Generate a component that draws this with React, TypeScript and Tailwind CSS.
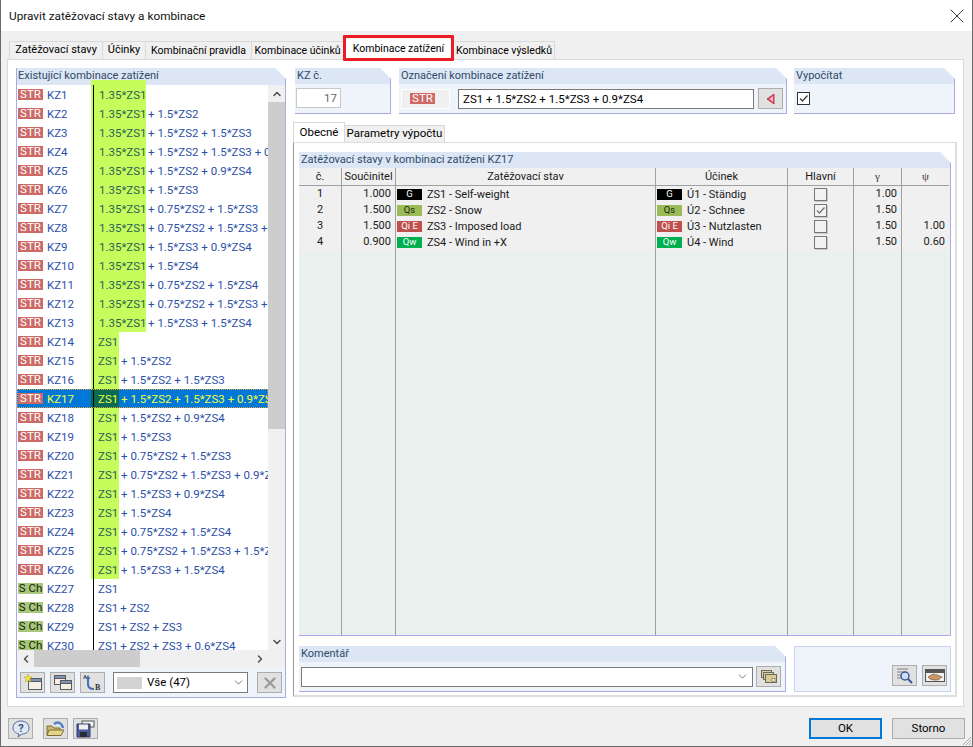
import type { ReactNode } from "react"
import { ChevronDown, ChevronLeft, ChevronRight, ChevronUp, X } from "lucide-react"

const TABS = [
  { label: "Zatěžovací stavy", w: "w-[93px] text-[11px]" },
  { label: "Účinky", w: "w-[43px] text-[11px]" },
  { label: "Kombinační pravidla", w: "w-[106px] text-[10.5px]" },
  { label: "Kombinace účinků", w: "w-[92px] text-[10.5px]" },
]

const STR_TERMS = [
  "",
  "+ 1.5*ZS2",
  "+ 1.5*ZS2 + 1.5*ZS3",
  "+ 1.5*ZS2 + 1.5*ZS3 + 0.9*ZS4",
  "+ 1.5*ZS2 + 0.9*ZS4",
  "+ 1.5*ZS3",
  "+ 0.75*ZS2 + 1.5*ZS3",
  "+ 0.75*ZS2 + 1.5*ZS3 + 0.9*ZS4",
  "+ 1.5*ZS3 + 0.9*ZS4",
  "+ 1.5*ZS4",
  "+ 0.75*ZS2 + 1.5*ZS4",
  "+ 0.75*ZS2 + 1.5*ZS3 + 1.5*ZS4",
  "+ 1.5*ZS3 + 1.5*ZS4",
]

const TABLE_ROWS = [
  { no: 1, factor: "1.000", tag: "G", tagClass: "bg-black text-white", loadCase: "ZS1 - Self-weight", action: "Ú1 - Ständig", main: false, gamma: "1.00", psi: "" },
  { no: 2, factor: "1.500", tag: "Qs", tagClass: "bg-[#9bbb59] text-[#1c2a08]", loadCase: "ZS2 - Snow", action: "Ú2 - Schnee", main: true, gamma: "1.50", psi: "" },
  { no: 3, factor: "1.500", tag: "Qi E", tagClass: "bg-[#c0504d] text-white", loadCase: "ZS3 - Imposed load", action: "Ú3 - Nutzlasten", main: false, gamma: "1.50", psi: "1.00" },
  { no: 4, factor: "0.900", tag: "Qw", tagClass: "bg-[#00b050] text-white", loadCase: "ZS4 - Wind in +X", action: "Ú4 - Wind", main: false, gamma: "1.50", psi: "0.60" },
]

function GroupBox({ title, className, children }: { title: string; className: string; children: ReactNode }) {
  return (
    <div className={`flex flex-col bg-[#eff3fa] border-r border-b border-[#aaaae6] [clip-path:polygon(0_0,calc(100%-11px)_0,100%_11px,100%_100%,0_100%)] ${className}`}>
      <div className="h-[16px] shrink-0 bg-[#dce6f4] pl-[2px] text-[11px] leading-[16px] text-[#2f4a68]">{title}</div>
      {children}
    </div>
  )
}

function IconButton({ children, className = "" }: { children: ReactNode; className?: string }) {
  return (
    <button className={`flex h-[21px] w-[25px] shrink-0 items-center justify-center border border-[#adadad] bg-[#e1e1e1] ${className}`}>
      {children}
    </button>
  )
}

function CaseBadge({ kind }: { kind: "STR" | "S Ch" }) {
  return (
    <span className={`flex h-[11px] w-[25px] shrink-0 items-center justify-center text-[11.5px] ${kind === "STR" ? "bg-[#cd6a66] text-white" : "bg-[#a9c77c] text-[#14240a]"}`}>
      {kind}
    </span>
  )
}

function ComboRow({ id, kind, head, tail, green }: { id: number; kind: "STR" | "S Ch"; head: string; tail: string; green: "wide" | "narrow" | "none" }) {
  const selected = id === 17
  const cellBg = selected ? "bg-[#0a6b52]" : green === "none" ? "" : "bg-[#c6fd5c]"
  const width = green === "wide" ? "w-[55px]" : "w-[28px]"
  const textColor = selected ? "text-[#f2ff3c]" : "text-[#2c4fa8]"
  return (
    <div className={`relative flex h-[19px] shrink-0 items-center whitespace-nowrap ${textColor} ${selected ? "bg-[#0078d7] outline-1 -outline-offset-1 outline-dotted outline-[#e0a040]" : ""}`}>
      <div className="ml-[1px] flex w-[73px] shrink-0 items-center">
        <CaseBadge kind={kind} />
        <span className="ml-[4px] pt-[2px]">KZ{id}</span>
      </div>
      <div className={`flex h-full shrink-0 items-center ${green === "none" ? "" : width} ${cellBg}`}>
        <span className="ml-[2px] h-full w-[1px] shrink-0 bg-black" />
        <span className={`pt-[2px] ${green === "wide" ? "ml-[5px]" : "ml-[4px]"} ${selected ? "" : green === "none" ? "" : "text-[#2c5f58]"}`}>{head}</span>
      </div>
      {tail && <span className="ml-[2px] pt-[2px]">{tail}</span>}
    </div>
  )
}

function WindowGlyph({ x, y, size = 12 }: { x: number; y: number; size?: number }) {
  return (
    <g>
      <rect x={x} y={y} width={size} height={size - 2} fill="#f4f1e4" stroke="#5a5a5a" />
      <rect x={x} y={y} width={size} height={3} fill="#7d93b8" stroke="#5a5a5a" />
    </g>
  )
}

function Checkbox({ checked, dark }: { checked: boolean; dark?: boolean }) {
  return (
    <span className={`flex h-[13px] w-[13px] items-center justify-center border bg-[#f2f2f2] ${dark ? "border-[#333333] bg-white" : "border-[#777777] shadow-[1px_1px_0_#c8c8c8]"}`}>
      {checked && (
        <svg width="11" height="11" viewBox="0 0 11 11">
          <path d="M2 5.5 L4.5 8 L9.5 2.5" fill="none" stroke={dark ? "#444444" : "#777777"} strokeWidth="1.4" />
        </svg>
      )}
    </span>
  )
}

function CombinationList() {
  const rows = [
    ...STR_TERMS.map((tail, i) => <ComboRow key={i + 1} id={i + 1} kind="STR" head="1.35*ZS1" tail={tail} green="wide" />),
    ...STR_TERMS.map((tail, i) => <ComboRow key={i + 14} id={i + 14} kind="STR" head="ZS1" tail={tail} green="narrow" />),
    <ComboRow key={27} id={27} kind="S Ch" head="ZS1" tail="" green="none" />,
    <ComboRow key={28} id={28} kind="S Ch" head="ZS1" tail="+ ZS2" green="none" />,
    <ComboRow key={29} id={29} kind="S Ch" head="ZS1" tail="+ ZS2 + ZS3" green="none" />,
    <ComboRow key={30} id={30} kind="S Ch" head="ZS1" tail="+ ZS2 + ZS3 + 0.6*ZS4" green="none" />,
  ]
  return (
    <div className="flex h-[630px] w-[270px] shrink-0 flex-col border-l border-r border-b border-[#aaaae6] bg-[#eff3fa] [clip-path:polygon(0_0,calc(100%-11px)_0,100%_11px,100%_100%,0_100%)]">
      <div className="relative h-[17px] shrink-0 bg-[#dce6f4] pl-[1px] text-[11px] leading-[16px] text-[#2f4a68]">
        <span className="absolute left-[74px] top-[12px] h-[5px] w-[55px] bg-[#c6fd5c]" />
        <span className="relative">Existující kombinace zatížení</span>
      </div>
      <div className="flex h-[565px] shrink-0">
        <div className="flex w-[251px] shrink-0 flex-col overflow-hidden bg-white">{rows}</div>
        <div className="flex w-[17px] shrink-0 flex-col items-center bg-[#f0f0f0]">
          <div className="flex h-[17px] w-full shrink-0 items-center justify-center">
            <ChevronUp size={12} strokeWidth={3} className="text-[#505050]" />
          </div>
          <div className="h-[327px] w-full shrink-0 bg-[#cdcdcd]" />
          <div className="flex-1" />
          <div className="flex h-[17px] w-full shrink-0 items-center justify-center">
            <ChevronDown size={12} strokeWidth={3} className="text-[#505050]" />
          </div>
        </div>
      </div>
      <div className="flex h-[17px] shrink-0 items-center bg-[#f0f0f0]">
        <div className="flex h-full w-[17px] shrink-0 items-center justify-center">
          <ChevronLeft size={12} strokeWidth={3} className="text-[#505050]" />
        </div>
        <div className="h-full w-[106px] shrink-0 bg-[#cdcdcd]" />
        <div className="flex-1" />
        <div className="mr-[17px] flex h-full w-[17px] shrink-0 items-center justify-center">
          <ChevronRight size={12} strokeWidth={3} className="text-[#505050]" />
        </div>
      </div>
      <div className="flex flex-1 items-center pl-[3px] pt-[1px]">
        <IconButton>
          <svg width="20" height="17" viewBox="0 0 20 17">
            <WindowGlyph x={5.5} y={4.5} size={13} />
            <path d="M5 0 L6 3 L9 3 L6.8 5 L7.6 8 L5 6.2 L2.4 8 L3.2 5 L1 3 L4 3 Z" fill="#f5e63c" stroke="#b8a020" strokeWidth="0.5" />
          </svg>
        </IconButton>
        <IconButton className="ml-[5px]">
          <svg width="20" height="17" viewBox="0 0 20 17">
            <WindowGlyph x={1.5} y={1.5} size={11} />
            <WindowGlyph x={7.5} y={6.5} size={11} />
          </svg>
        </IconButton>
        <IconButton className="ml-[5px]">
          <svg width="21" height="18" viewBox="0 0 21 18">
            <path d="M6 3 L6 10 Q6 15 12 15" fill="none" stroke="#3f6fb4" strokeWidth="2" />
            <path d="M3.5 5 L6 1 L8.5 5 Z" fill="#3f6fb4" />
            <text x="1" y="5" fontSize="6" fontWeight="700" fill="#555555">A</text>
            <text x="13" y="16" fontSize="8" fontWeight="700" fill="#333333" fontFamily="'Liberation Serif',serif">B</text>
          </svg>
        </IconButton>
        <div className="ml-[8px] flex h-[21px] w-[135px] shrink-0 items-center border border-[#7a7a7a] bg-white pl-[3px]">
          <span className="h-[12px] w-[25px] shrink-0 bg-[#d3d3d3]" />
          <span className="ml-[5px]">Vše (47)</span>
          <ChevronDown size={13} strokeWidth={1.3} className="ml-auto mr-[2px] text-[#444444]" />
        </div>
        <IconButton className="ml-[9px] bg-[#cfcfcf]">
          <X size={18} strokeWidth={3} className="text-[#9a9a9a]" />
        </IconButton>
      </div>
    </div>
  )
}

function LoadTable() {
  const cell = "border-r border-[#a0a0a0] h-full"
  return (
    <div className="grid h-[467px] grid-cols-[43px_54px_260px_132px_66px_48px_47px] grid-rows-[18px_16px_16px_16px_16px_1fr] bg-[#f0f0f0] text-[11px] text-[#1a1a1a]">
      {["č.", "Součinitel", "Zatěžovací stav", "Účinek", "Hlavní"].map((h) => (
        <div key={h} className={`${cell} border-b text-center leading-[17px]`}>{h}</div>
      ))}
      <div className={`${cell} border-b text-center font-['Liberation_Serif',serif] leading-[17px] text-[#333333]`}>γ</div>
      <div className={`h-full border-b border-[#a0a0a0] text-center font-['Liberation_Serif',serif] leading-[17px] text-[#333333]`}>ψ</div>
      {TABLE_ROWS.map((r) => (
        <div key={r.no} className="contents">
          <div className={`${cell} text-center leading-[16px]`}>{r.no}</div>
          <div className={`${cell} pr-[4px] text-right leading-[16px]`}>{r.factor}</div>
          <div className={`${cell} flex items-center whitespace-nowrap pl-[1px]`}>
            <span className={`flex h-[11px] w-[25px] shrink-0 items-center justify-center text-[9.5px] ${r.tagClass}`}>{r.tag}</span>
            <span className="ml-[5px] pt-[2px]">{r.loadCase}</span>
          </div>
          <div className={`${cell} flex items-center whitespace-nowrap pl-[1px]`}>
            <span className={`flex h-[11px] w-[25px] shrink-0 items-center justify-center text-[9.5px] ${r.tagClass}`}>{r.tag}</span>
            <span className="ml-[5px] pt-[2px]">{r.action}</span>
          </div>
          <div className={`${cell} flex items-center justify-center`}>
            <Checkbox checked={r.main} />
          </div>
          <div className={`${cell} pr-[4px] text-right leading-[16px]`}>{r.gamma}</div>
          <div className="pr-[4px] text-right leading-[16px]">{r.psi}</div>
        </div>
      ))}
      {[0, 1, 2, 3, 4, 5].map((i) => (
        <div key={i} className={`${cell} bg-[#e9f0ee]`} />
      ))}
      <div className="bg-[#e9f0ee]" />
    </div>
  )
}

function RightColumn() {
  return (
    <div className="flex w-[664px] shrink-0 flex-col">
      <div className="flex">
        <GroupBox title="KZ č." className="ml-[2px] h-[46px] w-[96px] shrink-0">
          <div className="ml-[1px] mt-[4px] h-[20px] w-[45px] border border-[#c8c8c8] bg-white pr-[3px] text-right leading-[18px] text-[#666666]">17</div>
        </GroupBox>
        <GroupBox title="Označení kombinace zatížení" className="ml-[8px] h-[46px] w-[388px] shrink-0">
          <div className="mt-[4px] flex items-center">
            <div className="ml-[2px] flex h-[20px] w-[49px] shrink-0 items-center border border-white bg-[#f0f0f0] pl-[8px]">
              <CaseBadge kind="STR" />
            </div>
            <div className="ml-[8px] h-[20px] w-[296px] shrink-0 border border-[#7a7a7a] bg-white pl-[4px] leading-[18px]">ZS1 + 1.5*ZS2 + 1.5*ZS3 + 0.9*ZS4</div>
            <IconButton className="ml-[4px] h-[20px]">
              <svg width="12" height="12" viewBox="0 0 12 12">
                <path d="M9 1 L9 11 L2 6 Z" fill="#f04860" stroke="#a82838" strokeWidth="0.8" />
                <path d="M8 3 L8 9 L4.5 6 Z" fill="#ffc0c8" />
              </svg>
            </IconButton>
          </div>
        </GroupBox>
        <GroupBox title="Vypočítat" className="ml-[7px] h-[46px] w-[161px] shrink-0">
          <div className="ml-[3px] mt-[8px]">
            <Checkbox checked dark />
          </div>
        </GroupBox>
      </div>
      <div className="mt-[8px] flex h-[20px] items-end whitespace-nowrap">
        <div className="flex h-[20px] w-[52px] items-center justify-center border-l border-t border-r border-[#d9d9d9] bg-white">Obecné</div>
        <div className="flex h-[17px] w-[100px] items-center justify-center border-t border-r border-[#d9d9d9] bg-[#f0f0f0]">Parametry výpočtu</div>
      </div>
      <div className="flex h-[555px] w-[664px] flex-col border-l border-t border-r-2 border-b-2 border-[#dedede] border-l-[#9a9a9a] bg-white px-[5px] pt-[9px]">
        <div className="h-[484px] w-[652px] shrink-0 border-r border-b border-[#aaaae6] [clip-path:polygon(0_0,calc(100%-11px)_0,100%_11px,100%_100%,0_100%)]">
          <div className="h-[16px] bg-[#dce6f4] pl-[2px] text-[11px] leading-[16px] text-[#2f4a68]">Zatěžovací stavy v kombinaci zatížení KZ17</div>
          <LoadTable />
        </div>
        <div className="mt-[10px] flex">
          <GroupBox title="Komentář" className="h-[46px] w-[487px] shrink-0">
            <div className="mt-[4px] flex items-center pl-[2px]">
              <div className="flex h-[20px] w-[452px] shrink-0 items-center justify-end border border-[#7a7a7a] bg-white pr-[3px]">
                <ChevronDown size={13} strokeWidth={1.3} className="text-[#444444]" />
              </div>
              <IconButton className="ml-[3px] h-[20px]">
                <svg width="18" height="15" viewBox="0 0 18 15">
                  <rect x="1.5" y="1.5" width="10" height="7" fill="#d8d0a8" stroke="#6a6a58" />
                  <rect x="3.5" y="3.5" width="10" height="7" fill="#d8d0a8" stroke="#6a6a58" />
                  <rect x="5.5" y="5.5" width="11" height="8" fill="#d8cc90" stroke="#6a6a58" />
                  <rect x="12" y="9.5" width="3" height="3" fill="#f4f4f4" stroke="#6a6a58" strokeWidth="0.6" />
                </svg>
              </IconButton>
            </div>
          </GroupBox>
          <div className="ml-[8px] flex h-[46px] w-[157px] shrink-0 items-end justify-end gap-[5px] border border-[#c8d4f0] bg-[#eff3fa] pb-[5px] pr-[3px]">
            <IconButton>
              <svg width="19" height="17" viewBox="0 0 19 17">
                <path d="M2 2 H13 M2 5 H11 M2 8 H8 M2 11 H7" stroke="#808080" strokeWidth="1" />
                <circle cx="10" cy="9" r="4" fill="#cfe0f4" stroke="#3c5a96" strokeWidth="1.5" />
                <path d="M13 12 L17 16" stroke="#3c5a96" strokeWidth="2.2" />
              </svg>
            </IconButton>
            <IconButton>
              <svg width="20" height="15" viewBox="0 0 20 15">
                <rect x="0.5" y="1.5" width="19" height="12" fill="#f0f0f0" stroke="#555555" />
                <rect x="1" y="2" width="18" height="3" fill="#555555" />
                <path d="M3 9 L8 6 L12 7 L17 9 L13 12 L9 12 L5 11 Z" fill="#c89868" stroke="#6a4a30" strokeWidth="0.6" />
              </svg>
            </IconButton>
          </div>
        </div>
      </div>
    </div>
  )
}

export default function App() {
  return (
    <div className="relative flex h-[747px] w-[973px] flex-col overflow-hidden border-b border-l border-r border-[#6a6a6a] bg-[#f0f0f0] font-['Roboto',sans-serif] text-[11.5px] text-black">
      <div className="flex h-[31px] shrink-0 items-center justify-between bg-white pl-[8px] pr-[3px]">
        <span className="pt-[2px] text-[11.8px] text-[#111111]">Upravit zatěžovací stavy a kombinace</span>
        <X size={24} strokeWidth={0.9} className="text-[#222222]" />
      </div>
      <div className="flex h-[28px] shrink-0 items-end pl-[8px]">
        {TABS.map((t) => (
          <div key={t.label} className={`flex h-[18px] ${t.w} items-center justify-center whitespace-nowrap border-l border-t border-[#d9d9d9] bg-[#f0f0f0]`}>
            {t.label}
          </div>
        ))}
        <div className="relative flex h-[20px] w-[111px] items-center justify-center whitespace-nowrap bg-white text-[10.5px]">
          Kombinace zatížení
          <span className="absolute -bottom-[2px] -top-[4px] left-0 right-0 rounded-[1px] border-[3px] border-[#ed1c24]" />
        </div>
        <div className="flex h-[18px] w-[101px] items-center justify-center whitespace-nowrap border-r border-t border-[#d9d9d9] bg-[#f0f0f0] text-[10.5px]">
          Kombinace výsledků
        </div>
      </div>
      <div className="ml-[6px] flex h-[648px] w-[957px] shrink-0 border border-[#d9d9d9] bg-white pl-[8px] pt-[8px]">
        <CombinationList />
        <div className="w-[7px] shrink-0" />
        <RightColumn />
      </div>
      <div className="flex flex-1 items-start pl-[7px] pt-[11px]">
        <IconButton>
          <svg width="20" height="18" viewBox="0 0 20 18">
            <path d="M10 1 C15 1 18 4 18 8 C18 12 15 14 11 14 L7 17 L8 14 C4 13 2 11 2 8 C2 4 5 1 10 1 Z" fill="#dfe6f4" stroke="#586a94" />
            <text x="10" y="12" fontSize="11" fontWeight="700" textAnchor="middle" fill="#34507e">?</text>
          </svg>
        </IconButton>
        <IconButton className="ml-[10px]">
          <svg width="21" height="18" viewBox="0 0 21 18">
            <path d="M9 4 C13 1 17 3 18 8" fill="none" stroke="#4f7fc4" strokeWidth="2.4" />
            <path d="M2 6 H7 L9 8 H15 V15 H2 Z" fill="#c8b868" stroke="#7a6c34" />
            <path d="M4 10 H19 L16 15.5 H2 Z" fill="#e4d488" stroke="#7a6c34" />
          </svg>
        </IconButton>
        <IconButton className="ml-[5px]">
          <svg width="21" height="18" viewBox="0 0 21 18">
            <rect x="7" y="1" width="12" height="6" fill="#f2f2f2" stroke="#555555" />
            <path d="M2 4 H15 V17 H2 Z" fill="#4a5a9c" stroke="#333a66" />
            <rect x="4" y="4.5" width="9" height="5" fill="#f0f0f0" />
            <rect x="5" y="12" width="7" height="5" fill="#2c2c34" />
          </svg>
        </IconButton>
        <button className="ml-auto h-[21px] w-[73px] border-2 border-[#0078d7] bg-[#e1e1e1] leading-[17px]">OK</button>
        <button className="ml-[10px] mr-[7px] h-[21px] w-[73px] border border-[#adadad] bg-[#e1e1e1] leading-[19px]">Storno</button>
      </div>
      <svg className="absolute bottom-0 right-0" width="11" height="11" viewBox="0 0 11 11">
        <path d="M10 2 L2 10 M10 5 L5 10 M10 8 L8 10" stroke="#a8a8a8" strokeWidth="1" />
      </svg>
    </div>
  )
}
